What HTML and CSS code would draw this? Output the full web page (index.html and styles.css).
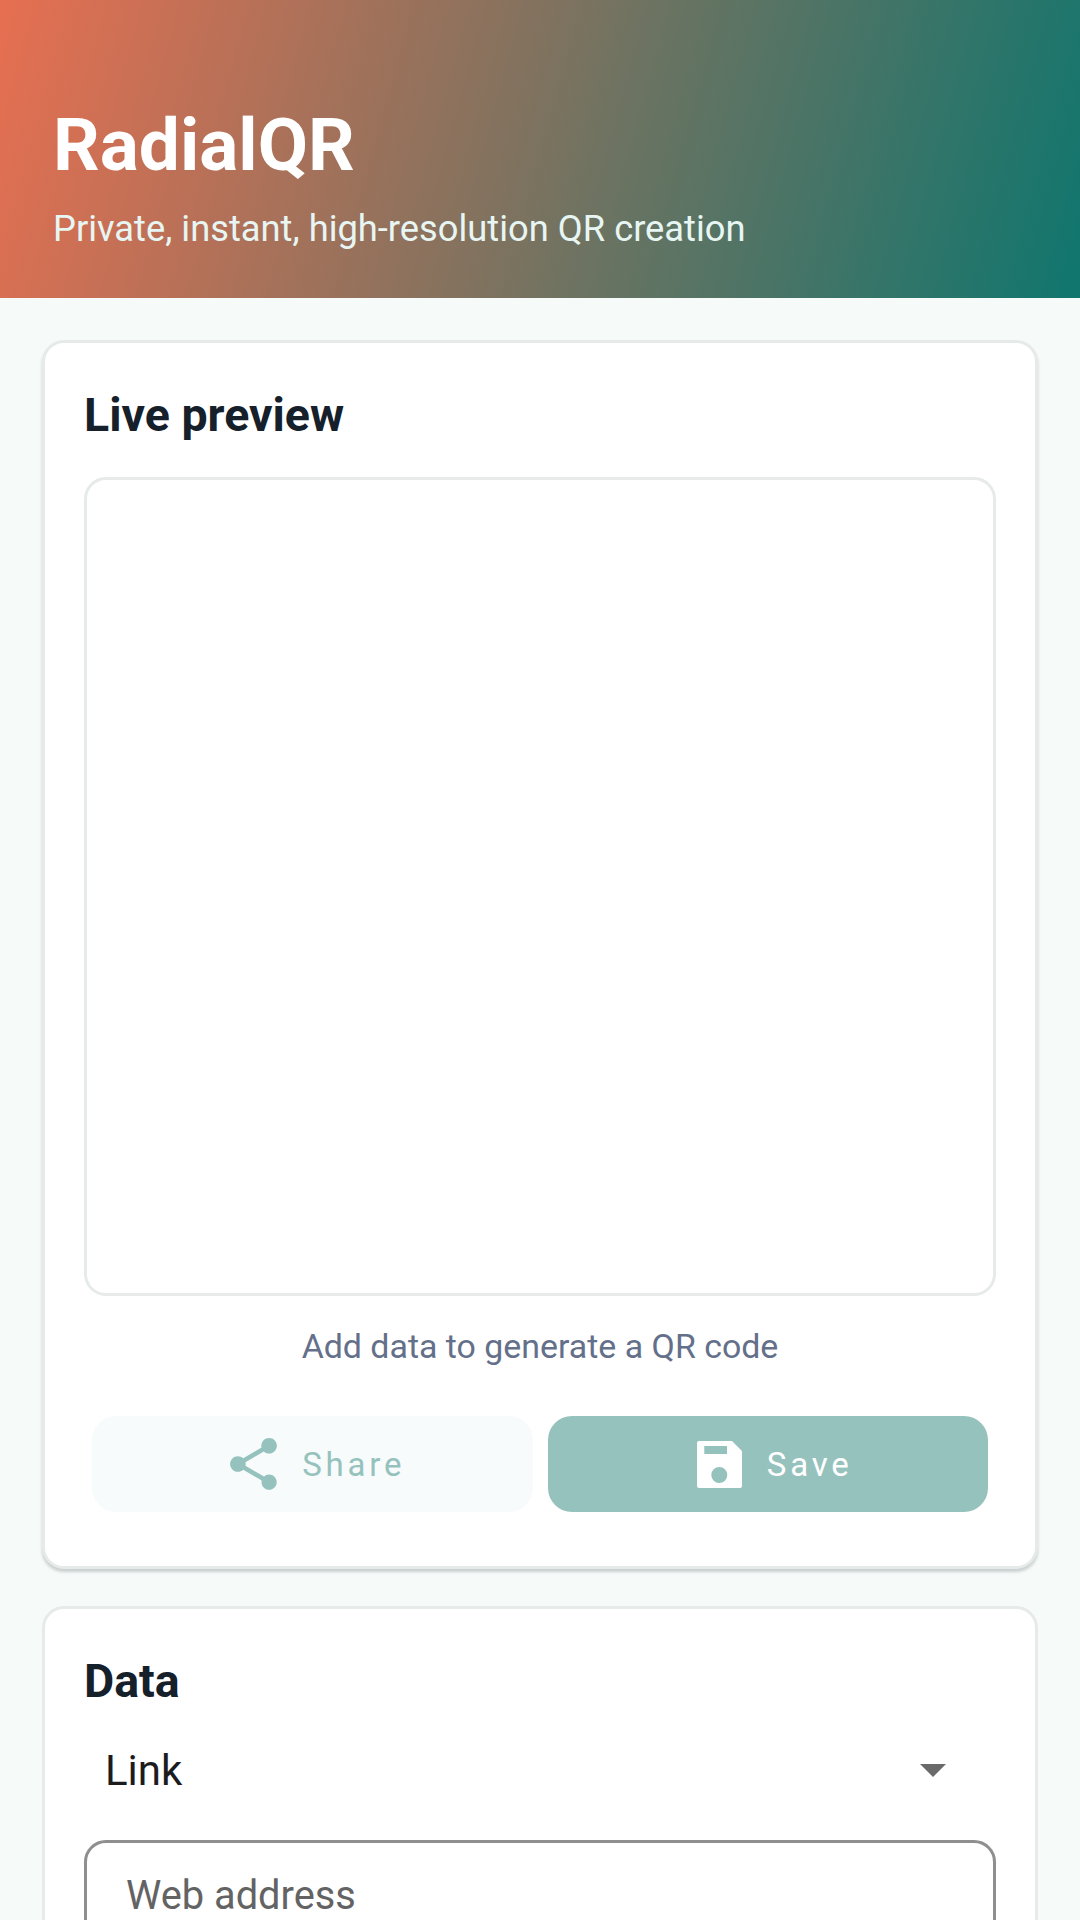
FILE: index.html
```html
<!DOCTYPE html>
<html lang="en">
<head>
<meta charset="utf-8">
<title>RadialQR</title>
<link rel="stylesheet" href="styles.css">
</head>
<body>
<div class="app">
  <header class="hero">
    <h1 class="hero-title">RadialQR</h1>
    <p class="hero-sub">Private, instant, high-resolution QR creation</p>
  </header>
  <main class="content">
    <section class="card card-preview">
      <h2 class="card-title">Live preview</h2>
      <div class="preview-box"></div>
      <p class="hint">Add data to generate a QR code</p>
      <div class="actions">
        <button class="btn btn-share" type="button" disabled>
          <svg class="icon icon-share" viewBox="3 2 18 20" aria-hidden="true"><path d="M18 16.08c-.76 0-1.44.3-1.96.77L8.91 12.7c.05-.23.09-.46.09-.7s-.04-.47-.09-.7l7.05-4.11c.54.5 1.25.81 2.04.81 1.66 0 3-1.34 3-3s-1.34-3-3-3-3 1.34-3 3c0 .24.04.47.09.7L8.04 9.81C7.5 9.31 6.79 9 6 9c-1.66 0-3 1.34-3 3s1.34 3 3 3c.79 0 1.5-.31 2.04-.81l7.12 4.16c-.05.21-.08.43-.08.65 0 1.61 1.31 2.92 2.92 2.92 1.61 0 2.92-1.31 2.92-2.92s-1.31-2.92-2.92-2.92z"/></svg>
          <span>Share</span>
        </button>
        <button class="btn btn-save" type="button" disabled>
          <svg class="icon icon-save" viewBox="0 0 45 47" aria-hidden="true"><path fill-rule="evenodd" d="M2 0H35L45 10V45a2 2 0 0 1-2 2H2a2 2 0 0 1-2-2V2a2 2 0 0 1 2-2zM7.300 5V13H30V5zM22.300 26a8 8 0 1 0 0 16a8 8 0 1 0 0-16z"/></svg>
          <span>Save</span>
        </button>
      </div>
    </section>
    <section class="card card-data">
      <h2 class="card-title">Data</h2>
      <div class="select-row">
        <span class="select-value">Link</span>
        <svg class="select-arrow" viewBox="0 0 26 13" aria-hidden="true"><path d="M0 0H26L13 13z"/></svg>
      </div>
      <div class="field"><span class="field-label">Web address</span></div>
    </section>
  </main>
</div>
</body>
</html>
```
FILE: styles.css
```css
* { box-sizing: border-box; }

html, body {
  margin: 0;
  height: 1920px;
  overflow: hidden;
  background: #f6faf9;
  font-family: Roboto, "Liberation Sans", sans-serif;
}

.app { height: 1920px; overflow: hidden; }

.hero {
  height: 298px;
  padding: 103px 53px 0;
  background: linear-gradient(105.4deg, #e76f51 0%, #0f766e 100%);
}

.hero-title {
  margin: 0;
  font-size: 73px;
  line-height: 84px;
  font-weight: 700;
  color: #fff;
}

.hero-sub {
  margin: 18px 0 0;
  font-size: 36.3px;
  line-height: 48px;
  font-weight: 400;
  color: #e7f6f3;
}

.content { padding: 42px 42px 0; }

.card {
  background: #fff;
  border: 3px solid #e6ebea;
  border-radius: 22px;
  padding: 0 39px;
}

.card-preview {
  height: 1229px;
  padding-top: 46px;
  box-shadow: 0 3px 3px rgba(40, 60, 60, 0.22);
}

.card-data {
  margin-top: 37px;
  height: 400px;
  padding-top: 46px;
}

.card-title {
  margin: 0;
  font-size: 46.5px;
  line-height: 52px;
  font-weight: 700;
  color: #15202b;
}

.preview-box {
  height: 819px;
  margin-top: 36px;
  border: 3px solid #e6ebea;
  border-radius: 22px;
  background: #fff;
}

.hint {
  margin: 29px 0 0;
  text-align: center;
  font-size: 33.9px;
  line-height: 44px;
  color: #64708a;
}

.actions {
  display: grid;
  grid-template-columns: 1fr 1fr;
  gap: 15px;
  margin-top: 47px;
  padding: 0 8px;
}

.btn {
  height: 96px;
  border: 0;
  border-radius: 24px;
  padding: 0 0 0 11px;
  display: flex;
  align-items: center;
  justify-content: center;
  gap: 25px;
  font-family: inherit;
  font-size: 33px;
  font-weight: 400;
  letter-spacing: 3.8px;
}

.btn-share { background: #f7fbfb; color: #96c2bd; }
.btn-save { background: #96c2bd; color: #fff; padding-left: 14px; }

.icon { display: block; fill: currentColor; flex: none; }
.icon-share { width: 47px; height: 52px; }
.icon-save { width: 45px; height: 47px; }

.select-row {
  display: flex;
  align-items: center;
  justify-content: space-between;
  height: 72px;
  margin-top: 27px;
  padding: 0 50px 0 21px;
}

.select-value {
  font-size: 42px;
  color: #1c1c1e;
}

.select-arrow { width: 26px; height: 13px; fill: #6a6a6a; }

.field {
  margin-top: 34px;
  height: 160px;
  border: 3px solid #8f8f8f;
  border-radius: 22px;
  padding: 29px 39px;
}

.field-label {
  font-size: 39.8px;
  line-height: 48px;
  color: #636363;
  display: block;
}
```
